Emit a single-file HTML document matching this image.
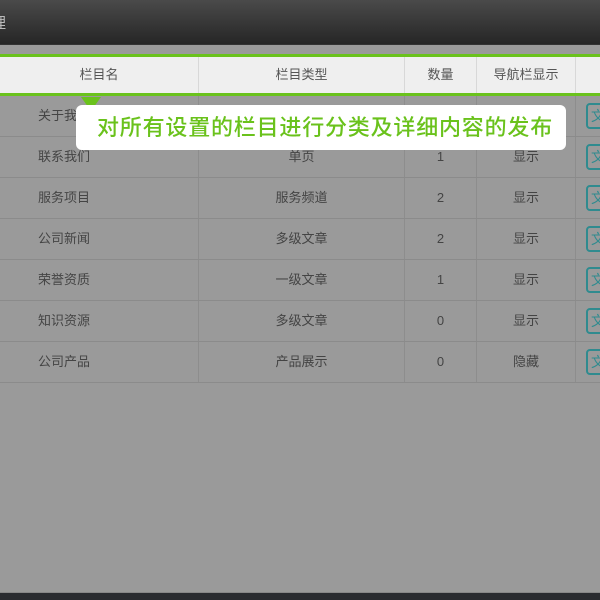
<!DOCTYPE html>
<html><head><meta charset="utf-8"><style>
*{margin:0;padding:0;box-sizing:border-box}
body{width:600px;height:600px;overflow:hidden;background:#9a9a9a;font-family:"Liberation Sans","Noto Sans CJK SC",sans-serif;position:relative}
.top{position:absolute;left:0;top:0;width:600px;height:45px;background:linear-gradient(#4a4a4a,#262626);border-bottom:1px solid #333}
.top span{position:absolute;left:-9px;top:12px;color:#bbb;font-size:15px}
.gl{position:absolute;left:0;width:600px;height:3px;background:#6ac21c}
.hdr{position:absolute;left:0;top:57px;width:600px;height:36px;background:#efefef}
.c{position:absolute;text-align:center;font-size:13px;color:#444;border-right:1px solid #8d8d8d}
.hdr .c{border-right:1px solid #d8d8d8;color:#555;height:36px;line-height:36px}
.row{position:absolute;left:0;width:600px;height:41px;border-bottom:1px solid #8b8b8b}
.row .c{height:40px;line-height:40px}
.btn{position:absolute;left:586px;top:7px;width:24px;height:26px;border:2px solid #2f8b8f;border-radius:4px;color:#2f8b8f;font-size:14px;line-height:22px;padding-left:3px}
.tip{position:absolute;left:76px;top:105px;width:490px;height:45px;background:#fff;border-radius:6px;color:#6ac21c;font-size:22px;letter-spacing:0.8px;line-height:45px;padding-left:21px;font-weight:500;white-space:nowrap}
.tri{position:absolute;left:81px;top:97px;width:0;height:0;border-left:10px solid transparent;border-right:10px solid transparent;border-top:14px solid #6ac21c}
.bot{position:absolute;left:0;top:592px;width:600px;height:8px;background:#2a2c30;border-top:1px solid #888}
</style></head><body>
<div class="top"><span>理</span></div>
<div class="gl" style="top:54px"></div>
<div class="hdr">
<div class="c" style="left:0;width:199px">栏目名</div>
<div class="c" style="left:199px;width:206px">栏目类型</div>
<div class="c" style="left:405px;width:72px">数量</div>
<div class="c" style="left:477px;width:99px">导航栏显示</div>
</div>
<div class="gl" style="top:93px"></div>
<div class="row" style="top:96px"><div class="c" style="left:0;width:199px;text-align:left;padding-left:38px">关于我们</div><div class="c" style="left:199px;width:206px">单页</div><div class="c" style="left:405px;width:72px">1</div><div class="c" style="left:477px;width:99px">显示</div><div class="btn">文</div></div>
<div class="row" style="top:137px"><div class="c" style="left:0;width:199px;text-align:left;padding-left:38px">联系我们</div><div class="c" style="left:199px;width:206px">单页</div><div class="c" style="left:405px;width:72px">1</div><div class="c" style="left:477px;width:99px">显示</div><div class="btn">文</div></div>
<div class="row" style="top:178px"><div class="c" style="left:0;width:199px;text-align:left;padding-left:38px">服务项目</div><div class="c" style="left:199px;width:206px">服务频道</div><div class="c" style="left:405px;width:72px">2</div><div class="c" style="left:477px;width:99px">显示</div><div class="btn">文</div></div>
<div class="row" style="top:219px"><div class="c" style="left:0;width:199px;text-align:left;padding-left:38px">公司新闻</div><div class="c" style="left:199px;width:206px">多级文章</div><div class="c" style="left:405px;width:72px">2</div><div class="c" style="left:477px;width:99px">显示</div><div class="btn">文</div></div>
<div class="row" style="top:260px"><div class="c" style="left:0;width:199px;text-align:left;padding-left:38px">荣誉资质</div><div class="c" style="left:199px;width:206px">一级文章</div><div class="c" style="left:405px;width:72px">1</div><div class="c" style="left:477px;width:99px">显示</div><div class="btn">文</div></div>
<div class="row" style="top:301px"><div class="c" style="left:0;width:199px;text-align:left;padding-left:38px">知识资源</div><div class="c" style="left:199px;width:206px">多级文章</div><div class="c" style="left:405px;width:72px">0</div><div class="c" style="left:477px;width:99px">显示</div><div class="btn">文</div></div>
<div class="row" style="top:342px"><div class="c" style="left:0;width:199px;text-align:left;padding-left:38px">公司产品</div><div class="c" style="left:199px;width:206px">产品展示</div><div class="c" style="left:405px;width:72px">0</div><div class="c" style="left:477px;width:99px">隐藏</div><div class="btn">文</div></div>
<div class="tri"></div>
<div class="tip">对所有设置的栏目进行分类及详细内容的发布</div>
<div class="bot"></div>
</body></html>
